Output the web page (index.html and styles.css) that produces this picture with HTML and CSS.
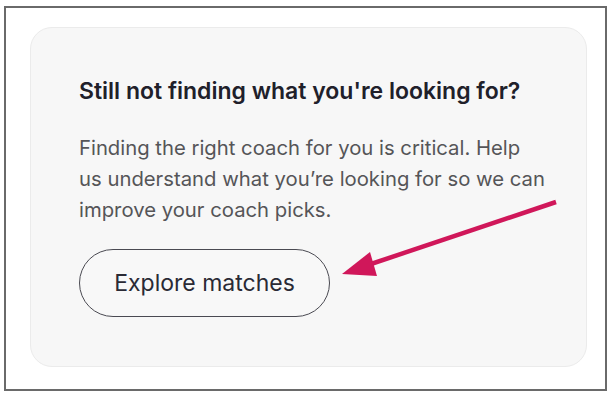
FILE: index.html
```html
<!DOCTYPE html>
<html>
<head>
<meta charset="utf-8">
<link rel="stylesheet" href="styles.css">
</head>
<body>
<div class="frame">
  <div class="card">
    <h2 class="title">Still not finding what you're looking for?</h2>
    <p class="text">Finding the right coach for you is critical. Help<br>us understand what you’re looking for so we can<br>improve your coach picks.</p>
    <button class="btn">Explore matches</button>
  </div>
  <svg class="arrow" width="613" height="400" viewBox="0 0 613 400">
    <line x1="556" y1="202" x2="365" y2="266" stroke="#d0175a" stroke-width="4.5" stroke-linecap="butt"/>
    <polygon points="342,274 370,252 377,276" fill="#d0175a"/>
  </svg>
</div>
</body>
</html>
```
FILE: styles.css
```css
html, body {
  margin: 0;
  padding: 0;
  background: #ffffff;
}
body {
  width: 613px;
  height: 400px;
  overflow: hidden;
  font-family: Inter, "Noto Sans", sans-serif;
}
.frame {
  box-sizing: border-box;
  margin: 6px 0 0 4px;
  width: 603px;
  height: 385px;
  border: 2px solid #6a6a6a;
  padding: 19px 18px 0 24px;
}
.card {
  box-sizing: border-box;
  height: 340px;
  background: #f7f7f7;
  border: 1px solid #ebebeb;
  border-radius: 22px;
  padding: 49px 20px 0 48px;
}
.title {
  margin: 0;
  font-size: 23px;
  line-height: 28px;
  font-weight: 600;
  color: #20202a;
}
.text {
  margin: 27px 0 0 0;
  font-size: 20.3px;
  line-height: 31px;
  color: #555558;
  white-space: nowrap;
}
.btn {
  margin-top: 24px;
  width: 251px;
  height: 68px;
  border: 1.5px solid #4a4a52;
  border-radius: 34px;
  background: #f8f8f8;
  font-family: Inter, "Noto Sans", sans-serif;
  font-size: 23px;
  color: #2a2a35;
  padding: 0;
}
.arrow {
  position: absolute;
  left: 0;
  top: 0;
  pointer-events: none;
}
```
